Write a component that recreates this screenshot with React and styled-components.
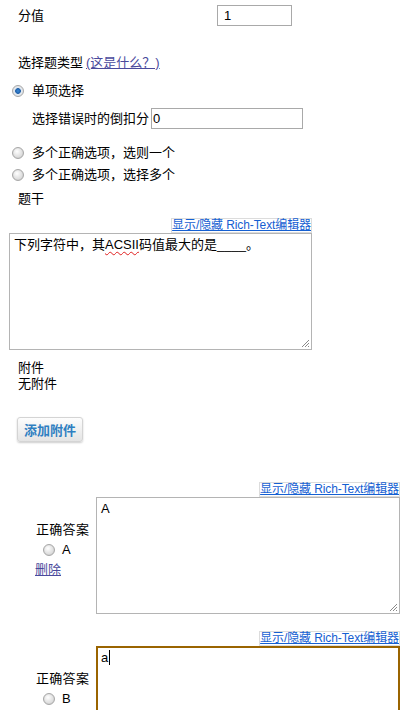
import React from 'react';
import styled, { createGlobalStyle } from 'styled-components';

const GlobalStyle = createGlobalStyle`
  body {
    margin: 0;
    background: #fff;
    font-family: "Liberation Sans", Arial, "Noto Sans CJK SC", sans-serif;
    font-size: 13px;
    color: #000;
  }
`;

const Page = styled.div`
  width: 410px;
  height: 710px;
  overflow: hidden;
`;

const ScoreRow = styled.div`
  display: flex;
  align-items: center;
  margin-top: 5px;
  padding-left: 18px;
  height: 21px;
`;

const Label = styled.span`
  display: inline-block;
  width: ${p => p.$width || 'auto'};
  line-height: 16px;
  white-space: nowrap;
`;

const TextInput = styled.div`
  box-sizing: border-box;
  width: ${p => p.$width}px;
  height: 21px;
  border: 1px solid #a9a9a9;
  padding-left: ${p => p.$pad}px;
  line-height: 19px;
  font-size: 13px;
`;

const Heading = styled.div`
  margin-top: ${p => p.$top}px;
  padding-left: 18px;
  line-height: 16px;
`;

const HelpLink = styled.a`
  color: #4a4a9c;
  text-decoration: underline;
  margin-left: 3px;
`;

const OptionRow = styled.div`
  display: flex;
  align-items: center;
  gap: 8px;
  margin-top: ${p => p.$top}px;
  padding-left: 12px;
  line-height: 16px;
`;

const Radio = styled.span`
  box-sizing: border-box;
  display: inline-block;
  width: 12px;
  height: 12px;
  border-radius: 50%;
  border: 1px solid #a7a7a7;
  background: ${p =>
    p.$checked
      ? 'radial-gradient(circle at 50% 50%, #3a8ad8 0, #1f5fa8 2.5px, #dfe6ee 3.2px, #f4f4f4 100%)'
      : 'radial-gradient(circle at 40% 35%, #ffffff 0, #e6e6e6 45%, #cfcfcf 100%)'};
  box-shadow: inset 0 0 1px rgba(0, 0, 0, 0.15);
  flex: 0 0 auto;
`;

const PenaltyRow = styled.div`
  display: flex;
  align-items: center;
  gap: 2px;
  margin-top: 9px;
  padding-left: 32px;
  height: 21px;
`;

const EditorBlock = styled.div`
  display: flex;
  flex-direction: column;
  align-items: flex-end;
  width: ${p => p.$width}px;
  margin-left: ${p => p.$left || 0}px;
  margin-top: ${p => p.$top || 0}px;
`;

const ToggleLink = styled.a`
  display: inline-block;
  border: 1px solid #dcdcdc;
  font-size: 12px;
  line-height: 13px;
  color: #1560d2;
  text-decoration: underline;
  white-space: nowrap;
  letter-spacing: -0.1px;
`;

const EditorBox = styled.div`
  position: relative;
  box-sizing: border-box;
  width: 100%;
  height: ${p => p.$height}px;
  border: ${p => (p.$focused ? '2px solid #9a6400' : '1px solid #b4b4b4')};
  padding: ${p => (p.$focused ? '2px 3px' : '3px 4px')};
  font-size: 13px;
  line-height: 16px;
`;

const Misspelled = styled.span`
  text-decoration: underline wavy #e02020;
  text-decoration-skip-ink: none;
  text-underline-offset: 2px;
  text-decoration-thickness: 1px;
`;

const Caret = styled.span`
  display: inline-block;
  width: 1px;
  height: 15px;
  background: #000;
  vertical-align: -3px;
  margin-left: 1px;
`;

const Grip = styled.svg`
  position: absolute;
  right: 1px;
  bottom: 1px;
`;

const AddButton = styled.button`
  display: block;
  box-sizing: border-box;
  width: 66px;
  height: 25px;
  margin: 25px 0 0 17px;
  padding: 0;
  border: 1px solid #d4d4d4;
  border-radius: 3px;
  background: linear-gradient(#fdfdfd, #e4e4e4);
  box-shadow: 0 1px 2px rgba(0, 0, 0, 0.2);
  color: #2f7fc1;
  font-family: "Liberation Sans", Arial, "Noto Sans CJK SC", sans-serif;
  font-size: 13px;
  font-weight: bold;
`;

const AnswerRow = styled.div`
  display: flex;
  align-items: center;
  margin-top: ${p => p.$top}px;
`;

const AnswerSide = styled.div`
  box-sizing: border-box;
  width: 96px;
  padding: 4px 0 0 35px;
  line-height: 20px;
  flex: 0 0 auto;
`;

const AnswerTitle = styled.div`
  margin-left: 1px;
  letter-spacing: 0.3px;
`;

const AnswerChoice = styled.div`
  display: flex;
  align-items: center;
  gap: 7px;
  padding-left: 8px;
`;

const DeleteLink = styled.a`
  display: block;
  color: #4a4a9c;
  text-decoration: underline;
`;

const ResizeGrip = () => (
  <Grip width="10" height="10" viewBox="0 0 10 10">
    <path d="M9 2 L2 9 M9 5 L5 9 M9 8 L8 9" stroke="#8a8a8a" strokeWidth="1" />
  </Grip>
);

const Answer = ({ letter, text, focused, top }) => (
  <AnswerRow $top={top}>
    <AnswerSide>
      <AnswerTitle>正确答案</AnswerTitle>
      <AnswerChoice>
        <Radio />
        <span>{letter}</span>
      </AnswerChoice>
      <DeleteLink href="#">删除</DeleteLink>
    </AnswerSide>
    <EditorBlock $width={304}>
      <ToggleLink href="#">显示/隐藏 Rich-Text编辑器</ToggleLink>
      <EditorBox $height={117} $focused={focused}>
        {text}
        {focused && <Caret />}
        <ResizeGrip />
      </EditorBox>
    </EditorBlock>
  </AnswerRow>
);

export default function App() {
  return (
    <Page>
      <GlobalStyle />
      <ScoreRow>
        <Label $width="199px">分值</Label>
        <TextInput $width={75} $pad={6}>1</TextInput>
      </ScoreRow>

      <Heading $top={29}>
        选择题类型<HelpLink href="#">(这是什么？)</HelpLink>
      </Heading>

      <OptionRow $top={12}>
        <Radio $checked />
        <span>单项选择</span>
      </OptionRow>
      <PenaltyRow>
        <Label>选择错误时的倒扣分</Label>
        <TextInput $width={152} $pad={1}>0</TextInput>
      </PenaltyRow>
      <OptionRow $top={16}>
        <Radio />
        <span>多个正确选项，选则一个</span>
      </OptionRow>
      <OptionRow $top={6}>
        <Radio />
        <span>多个正确选项，选择多个</span>
      </OptionRow>

      <Heading $top={8}>题干</Heading>
      <EditorBlock $width={303} $left={9} $top={11}>
        <ToggleLink href="#">显示/隐藏 Rich-Text编辑器</ToggleLink>
        <EditorBox $height={117}>
          下列字符中，其<Misspelled>ACSII</Misspelled>码值最大的是____。
          <ResizeGrip />
        </EditorBox>
      </EditorBlock>

      <Heading $top={10}>
        附件
        <br />
        无附件
      </Heading>
      <AddButton>添加附件</AddButton>

      <Answer letter="A" text="A" top={40} />
      <Answer letter="B" text="a" focused top={17} />
    </Page>
  );
}
